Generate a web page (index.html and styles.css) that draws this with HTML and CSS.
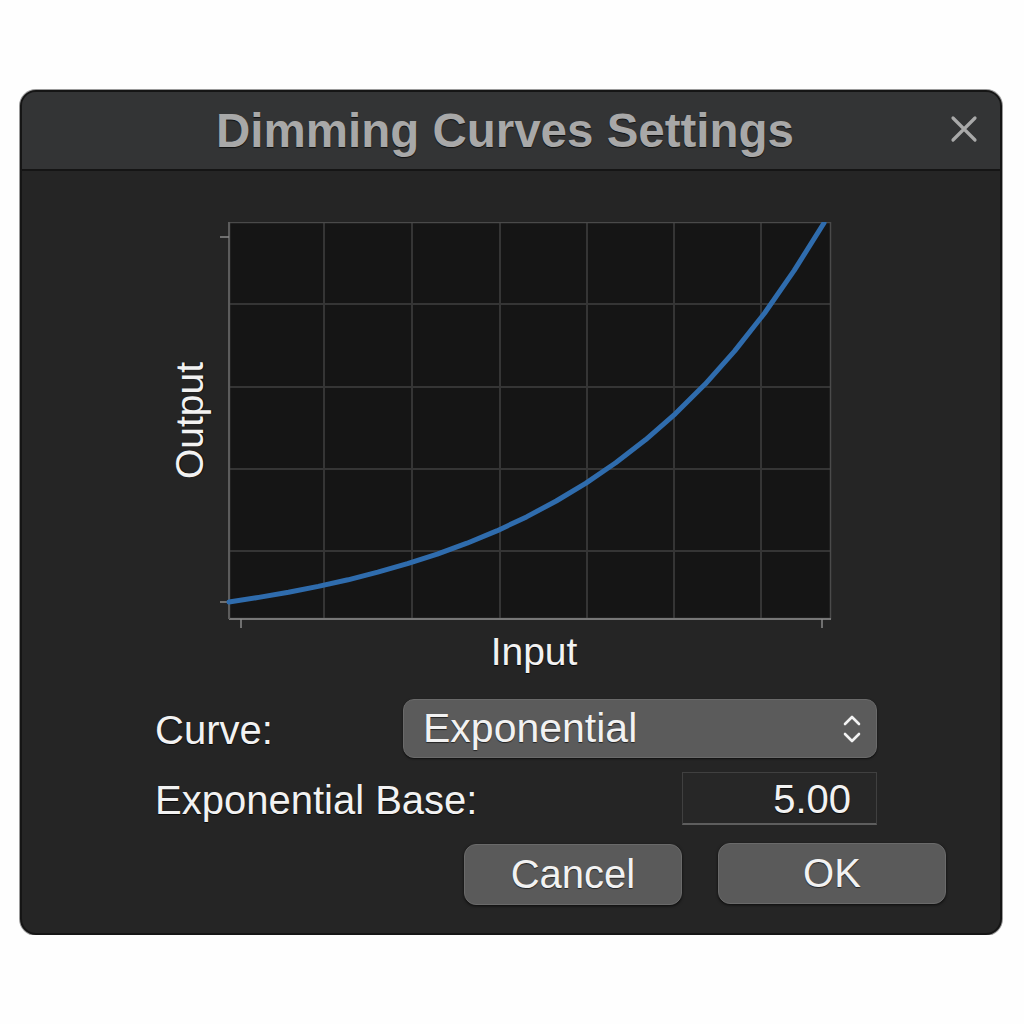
FILE: index.html
```html
<!DOCTYPE html>
<html lang="en">
<head>
    <meta charset="UTF-8">
    <meta name="viewport" content="width=device-width, initial-scale=1.0">
    <title>Dimming Curves Settings</title>
    <link rel="stylesheet" href="styles.css">
</head>
<body>
    <div class="dialog">
        <header class="titlebar">
            <span></span>
            <h1>Dimming Curves Settings</h1>
            <button class="close" aria-label="Close">
                <svg width="28" height="28" viewBox="0 0 28 28">
                    <path d="M3 3 L25 25 M25 3 L3 25" stroke="#a9a9a9" stroke-width="3.2" stroke-linecap="round"/>
                </svg>
            </button>
        </header>

        <section class="content">
            <div class="chart-row">
                <div class="y-label"><span>Output</span></div>
                <svg class="chart" width="613" height="407" viewBox="0 0 613 407">
                    <rect x="10" y="0" width="602" height="397" fill="#151515"/>
                    <!-- grid -->
                    <g stroke="#353535" stroke-width="2">
                        <line x1="105" y1="0" x2="105" y2="397"/>
                        <line x1="193" y1="0" x2="193" y2="397"/>
                        <line x1="281" y1="0" x2="281" y2="397"/>
                        <line x1="368" y1="0" x2="368" y2="397"/>
                        <line x1="455" y1="0" x2="455" y2="397"/>
                        <line x1="542" y1="0" x2="542" y2="397"/>
                        <line x1="10" y1="82" x2="612" y2="82"/>
                        <line x1="10" y1="165" x2="612" y2="165"/>
                        <line x1="10" y1="247" x2="612" y2="247"/>
                        <line x1="10" y1="329" x2="612" y2="329"/>
                    </g>
                    <rect x="10.5" y="0.5" width="601" height="396" fill="none" stroke="#4a4a4a" stroke-width="1.5"/>
                    <line x1="10" y1="397" x2="612" y2="397" stroke="#777" stroke-width="2"/>
                    <line x1="10" y1="0" x2="10" y2="397" stroke="#5c5c5c" stroke-width="2"/>
                    <!-- ticks -->
                    <g stroke="#8a8a8a" stroke-width="1.5">
                        <line x1="1" y1="15" x2="10" y2="15"/>
                        <line x1="1" y1="380" x2="10" y2="380"/>
                        <line x1="22" y1="397" x2="22" y2="406"/>
                        <line x1="603" y1="397" x2="603" y2="406"/>
                    </g>
                    <!-- curve, base 12 -->
                    <polyline fill="none" stroke="#2f6cad" stroke-width="5" stroke-linejoin="round" stroke-linecap="round"
                        points="10,380 39.75,375.4 69.5,370.3 99.25,364.4 129,357.8 158.75,350.2 188.5,341.7 218.25,332.1 248,321.2 277.75,308.9 307.5,294.9 337.25,279 367,261.1 396.75,240.8 426.5,217.8 456.25,191.8 486,162.3 515.75,128.9 545.5,91.2 575.25,48.4 605,1"/>
                </svg>
            </div>
            <div class="x-label">Input</div>

            <div class="form">
                <div class="form-row">
                    <label>Curve:</label>
                    <div class="select">
                        <span>Exponential</span>
                        <svg width="20" height="34" viewBox="0 0 20 34">
                            <path d="M3 12 L10 5 L17 12 M3 22 L10 29 L17 22" fill="none" stroke="#f2f2f2" stroke-width="2.6" stroke-linecap="round" stroke-linejoin="round"/>
                        </svg>
                    </div>
                </div>
                <div class="form-row base-row">
                    <label>Exponential Base:</label>
                    <div class="number">5.00</div>
                </div>
            </div>

            <div class="buttons">
                <button class="btn btn-cancel">Cancel</button>
                <button class="btn btn-ok">OK</button>
            </div>
        </section>
    </div>
</body>
</html>
```

FILE: styles.css
```css
body {
    margin: 0;
    background-color: #fefefe;
    font-family: "Liberation Sans", Arial, sans-serif;
    color: #f2f2f2;
}

.dialog {
    box-sizing: border-box;
    width: 982px;
    height: 845px;
    margin: 90px 0 0 20px;
    background-color: #252525;
    border: 2px solid #151515;
    border-radius: 16px;
    overflow: hidden;
    box-shadow: 0 0 0 1px #9a9a9a;
}

.titlebar {
    display: grid;
    grid-template-columns: 1fr auto 1fr;
    align-items: center;
    height: 77px;
    background-color: #333435;
    border-bottom: 2px solid #151515;
}

.titlebar h1 {
    margin: 0;
    padding-right: 12px;
    font-size: 47.5px;
    font-weight: bold;
    color: #a8a8a8;
    text-shadow: 0 1px 1px rgba(0, 0, 0, 0.7);
}

.close {
    justify-self: end;
    margin: -4px 22px 0 0;
    padding: 0;
    background: none;
    border: none;
    display: flex;
}

.content {
    padding-top: 51px;
}

.chart-row {
    display: flex;
    align-items: flex-start;
    padding-left: 148px;
}

.y-label {
    width: 40px;
    height: 397px;
    margin-right: 9px;
    display: flex;
    align-items: center;
    justify-content: center;
}

.y-label span {
    writing-mode: vertical-rl;
    transform: rotate(180deg);
    font-size: 39px;
    line-height: 40px;
    text-shadow: 0 1px 1px rgba(0, 0, 0, 0.8);
}

.chart {
    display: block;
}

.x-label {
    width: 602px;
    margin: -1px 0 0 211px;
    text-align: center;
    font-size: 39px;
    line-height: 48px;
    text-shadow: 0 1px 1px rgba(0, 0, 0, 0.8);
}

.form {
    padding: 23px 123px 0 133px;
}

.form-row {
    display: flex;
    justify-content: space-between;
    align-items: center;
}

.form-row label {
    font-size: 40px;
    padding-top: 3px;
    text-shadow: 0 1px 1px rgba(0, 0, 0, 0.8);
}

.select {
    box-sizing: border-box;
    width: 474px;
    height: 59px;
    display: flex;
    align-items: center;
    justify-content: space-between;
    padding: 0 14px 0 19px;
    background-color: #5b5b5b;
    border: 1px solid #6a6a6a;
    border-radius: 11px;
    box-shadow: 0 1px 2px rgba(0, 0, 0, 0.6);
    font-size: 41px;
    text-shadow: 0 1px 1px rgba(0, 0, 0, 0.6);
}

.base-row {
    margin-top: 14px;
}

.number {
    box-sizing: border-box;
    width: 195px;
    height: 53px;
    padding: 2px 25px 0 0;
    text-align: right;
    font-size: 40px;
    line-height: 48px;
    background-color: #272727;
    border: 1px solid #404040;
    border-bottom: 2px solid #5e5e5e;
    text-shadow: 0 1px 1px rgba(0, 0, 0, 0.8);
}

.buttons {
    display: flex;
    justify-content: flex-end;
    gap: 36px;
    padding: 19px 54px 0 0;
}

.btn {
    height: 61px;
    font-family: "Liberation Sans", Arial, sans-serif;
    font-size: 40px;
    color: #f2f2f2;
    background-color: #5a5a5a;
    border: 1px solid #6a6a6a;
    border-radius: 12px;
    box-shadow: 0 1px 3px rgba(0, 0, 0, 0.7);
    text-shadow: 0 1px 1px rgba(0, 0, 0, 0.6);
}

.btn-cancel {
    width: 218px;
}

.btn-ok {
    width: 228px;
    margin-top: -1px;
}
```
